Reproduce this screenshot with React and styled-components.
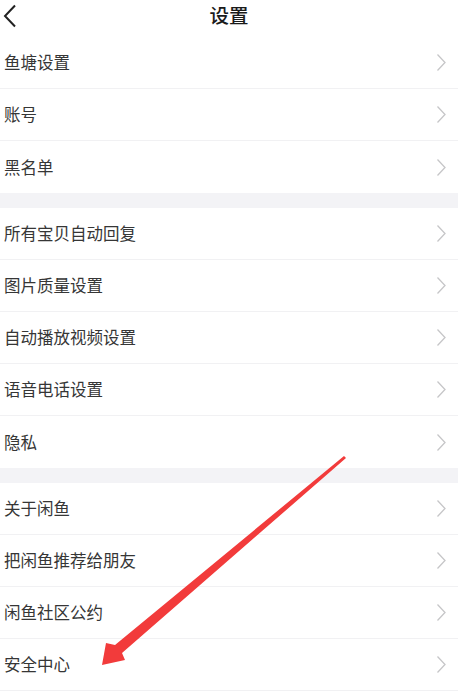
import React from 'react';
import styled, { createGlobalStyle } from 'styled-components';

const sections = [
  ['鱼塘设置', '账号', '黑名单'],
  ['所有宝贝自动回复', '图片质量设置', '自动播放视频设置', '语音电话设置', '隐私'],
  ['关于闲鱼', '把闲鱼推荐给朋友', '闲鱼社区公约', '安全中心'],
];

function Chevron() {
  return (
    <svg width="11" height="19" viewBox="0 0 11 19">
      <path d="M1.5 1.5 L9 9.5 L1.5 17.5" fill="none" stroke="#c6c6c8" strokeWidth="1.3" />
    </svg>
  );
}

function App() {
  return (
    <Page>
      <GlobalStyle />
      <Header>
        <BackButton>
          <svg width="14" height="24" viewBox="0 0 14 24">
            <path d="M12 1.5 L2 12 L12 22.5" fill="none" stroke="#222" strokeWidth="2" />
          </svg>
        </BackButton>
        <Title>设置</Title>
      </Header>
      {sections.map((items, i) => (
        <React.Fragment key={i}>
          {i > 0 && <Gap />}
          <Section>
            {items.map((label, j) => (
              <Row key={label} last={j === items.length - 1 && i < sections.length - 1}>
                <Label>{label}</Label>
                <Chevron />
              </Row>
            ))}
          </Section>
        </React.Fragment>
      ))}
      <Pointer viewBox="0 0 458 692" width="458" height="692">
        <polygon
          points="344,456 346,458 122,653 125,660 102,665 106,643 115,645"
          fill="#f23b3b"
        />
      </Pointer>
    </Page>
  );
}

export default App;

const GlobalStyle = createGlobalStyle`
  html, body {
    margin: 0;
    padding: 0;
    background: #ffffff;
  }
  body {
    font-family: "Noto Sans CJK SC", "Noto Sans", sans-serif;
  }
`;

const Page = styled.div`
  position: relative;
  width: 458px;
  height: 692px;
  overflow: hidden;
  background: #ffffff;
`;

const Header = styled.div`
  position: relative;
  height: 37px;
  display: flex;
  align-items: center;
  justify-content: center;
`;

const BackButton = styled.div`
  position: absolute;
  left: 3px;
  top: 4px;
  display: flex;
`;

const Title = styled.h1`
  margin: 0;
  font-size: 19.5px;
  font-weight: 500;
  color: #1a1a1a;
  line-height: 1;
  margin-top: -7px;
`;

const Section = styled.div`
  display: flex;
  flex-direction: column;
`;

const Gap = styled.div`
  height: 15px;
  background: #f3f3f6;
`;

const Row = styled.div`
  height: 52px;
  box-sizing: border-box;
  padding: 0 11px 0 4px;
  display: flex;
  align-items: center;
  justify-content: space-between;
  border-bottom: ${(p) => (p.last ? 'none' : '1px solid #f1f1f3')};
`;

const Label = styled.span`
  font-size: 16.5px;
  color: #363636;
  line-height: 1;
`;

const Pointer = styled.svg`
  position: absolute;
  left: 0;
  top: 0;
  pointer-events: none;
`;
